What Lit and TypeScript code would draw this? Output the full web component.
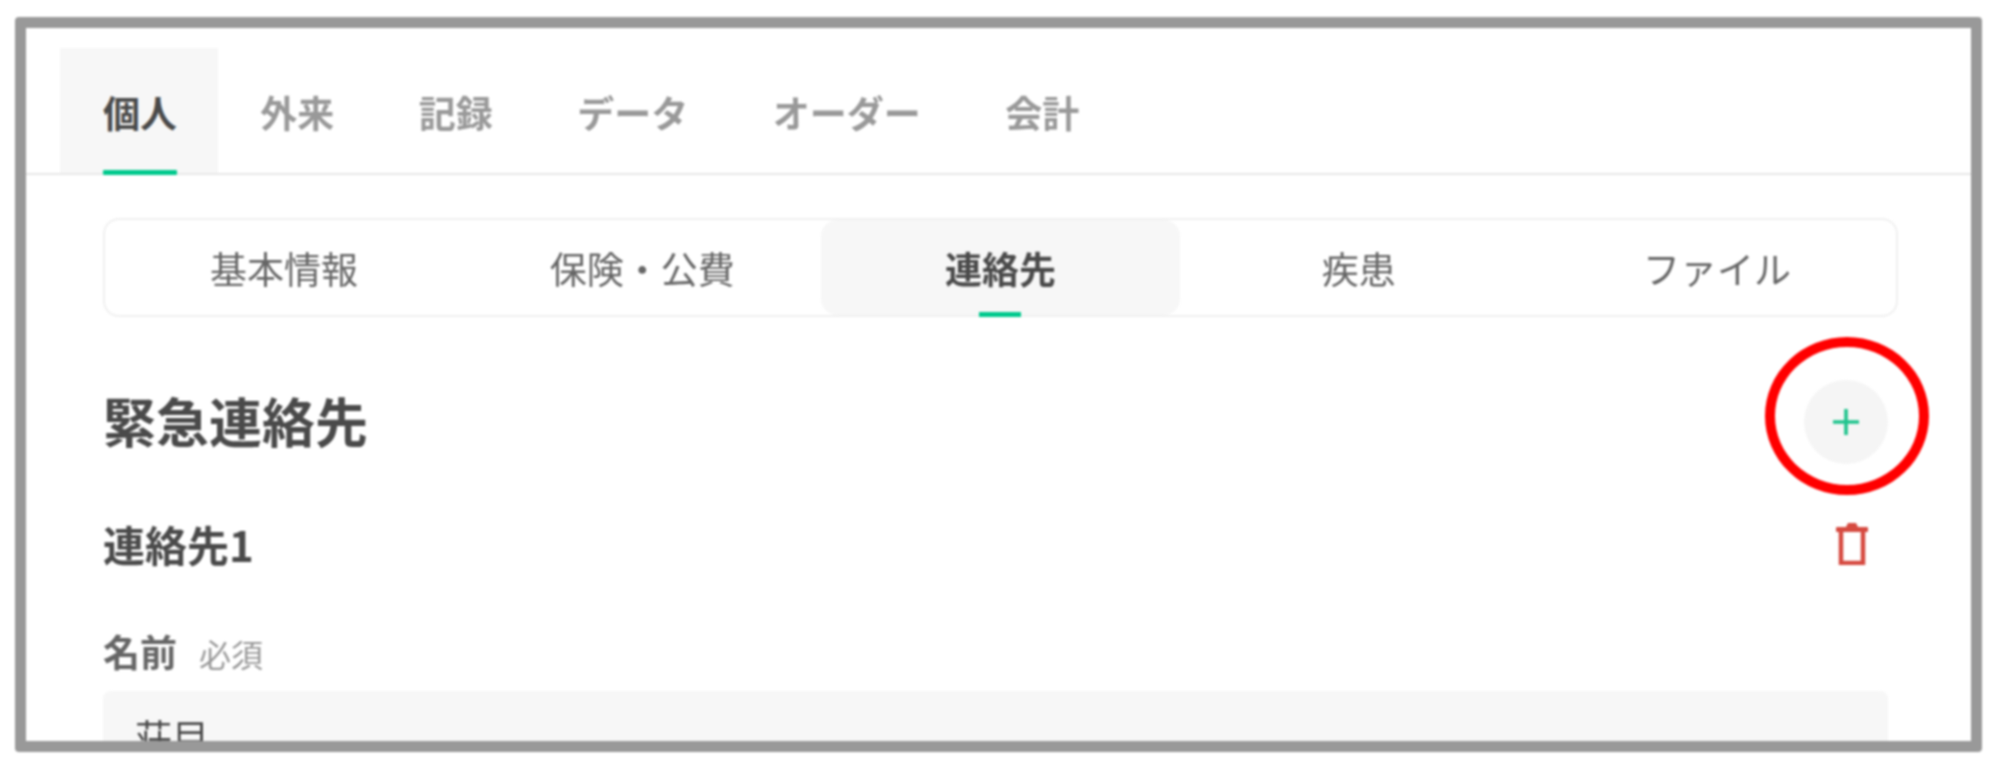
import { LitElement, html, css } from 'lit';
import { customElement } from 'lit/decorators.js';

const mainTabs = ['個人', '外来', '記録', 'データ', 'オーダー', '会計'];
const subTabs = ['基本情報', '保険・公費', '連絡先', '疾患', 'ファイル'];

@customElement('app-root')
export class AppRoot extends LitElement {
  render() {
    return html`
      <div class="frame">
        <nav class="main-tabs">
          ${mainTabs.map(
            (t, i) => html`<div class="main-tab ${i === 0 ? 'active' : ''}"><span>${t}</span></div>`
          )}
        </nav>
        <div class="content">
          <div class="sub-tabs">
            ${subTabs.map(
              (t, i) => html`<div class="sub-tab ${i === 2 ? 'active' : ''}">${t}</div>`
            )}
          </div>
          <div class="section-head">
            <h1>緊急連絡先</h1>
            <button class="add" aria-label="追加">
              <svg width="28" height="28" viewBox="0 0 28 28">
                <path d="M14 1v26M1 14h26" stroke="#1fc48d" stroke-width="3.6" fill="none" />
              </svg>
            </button>
          </div>
          <div class="contact-head">
            <h2>連絡先1</h2>
            <svg class="trash" width="32" height="42" viewBox="0 0 32 42">
              <path d="M10 4l2-4h8l2 4z" fill="#d64a40" />
              <rect x="0" y="4" width="32" height="5" rx="1" fill="#d64a40" />
              <path d="M5 9v31h22V9" stroke="#d64a40" stroke-width="4.5" fill="none" />
            </svg>
          </div>
          <div class="label">名前<span>必須</span></div>
          <div class="input">荘目</div>
        </div>
        <div class="ring"></div>
      </div>
    `;
  }

  static styles = css`
    :host {
      display: block;
      height: 767px;
      background: #fff;
      font-family: 'Noto Sans CJK JP', 'Noto Sans', sans-serif;
      color: #4a4a4a;
      overflow: hidden;
    }

    .frame {
      position: relative;
      box-sizing: border-box;
      width: 1967px;
      height: 735px;
      margin: 17px 0 0 15px;
      border: 11px solid #999;
      border-radius: 4px;
      overflow: hidden;
      filter: blur(0.8px);
    }

    .main-tabs {
      display: flex;
      height: 125px;
      padding: 20px 0 0 34px;
      border-bottom: 2px solid #e8e8e8;
    }

    .main-tab {
      position: relative;
      display: flex;
      align-items: center;
      padding: 2px 42.25px 0;
      font-size: 37px;
      font-weight: 700;
      color: #999;
    }

    .main-tab.active {
      background: #f7f7f7;
      color: #4a4a4a;
      padding: 2px 41px 0 43px;
    }

    .main-tab.active::after {
      content: '';
      position: absolute;
      left: 43px;
      right: 41px;
      bottom: -2px;
      height: 5px;
      border-radius: 1px;
      background: #00c98d;
    }

    .content {
      padding: 43px 73px 0 77px;
    }

    .sub-tabs {
      display: grid;
      grid-template-columns: repeat(5, 1fr);
      height: 99px;
      border: 2px solid #f0f0f0;
      border-radius: 16px;
      box-sizing: border-box;
    }

    .sub-tab {
      position: relative;
      display: flex;
      align-items: center;
      justify-content: center;
      font-size: 37px;
      color: #666;
    }

    .sub-tab.active {
      background: #f7f7f7;
      border-radius: 16px;
      color: #4a4a4a;
      font-weight: 700;
    }

    .sub-tab.active::after {
      content: '';
      position: absolute;
      left: 50%;
      bottom: -2px;
      width: 42px;
      height: 5px;
      margin-left: -21px;
      background: #00c98d;
    }

    .section-head,
    .contact-head {
      display: flex;
      justify-content: space-between;
    }

    .section-head {
      align-items: flex-start;
      margin-top: 63px;
      padding-right: 10px;
    }

    .contact-head {
      align-items: center;
      margin-top: 51px;
      padding-right: 30px;
    }

    h1,
    h2 {
      margin: 0;
      font-weight: 700;
      color: #4a4a4a;
    }

    h1 {
      font-size: 53px;
      line-height: 80px;
    }

    h2 {
      font-size: 42px;
      line-height: 58px;
    }

    .add {
      display: flex;
      align-items: center;
      justify-content: center;
      width: 84px;
      height: 84px;
      padding: 0;
      border: 0;
      border-radius: 50%;
      background: #f5f5f5;
    }

    .label {
      display: flex;
      align-items: baseline;
      gap: 22px;
      margin-top: 53px;
      font-size: 37px;
      line-height: 50px;
      font-weight: 700;
      color: #666;
    }

    .label span {
      font-size: 32px;
      font-weight: 400;
      color: #999;
    }

    .input {
      height: 90px;
      margin-top: 13px;
      margin-right: 10px;
      padding: 18px 32px;
      background: #f7f7f7;
      border-radius: 8px;
      font-size: 37px;
      box-sizing: border-box;
    }

    .ring {
      position: absolute;
      left: 1739px;
      top: 309px;
      width: 164px;
      height: 158px;
      box-sizing: border-box;
      border: 10px solid #f00;
      border-radius: 50%;
    }
  `;
}
